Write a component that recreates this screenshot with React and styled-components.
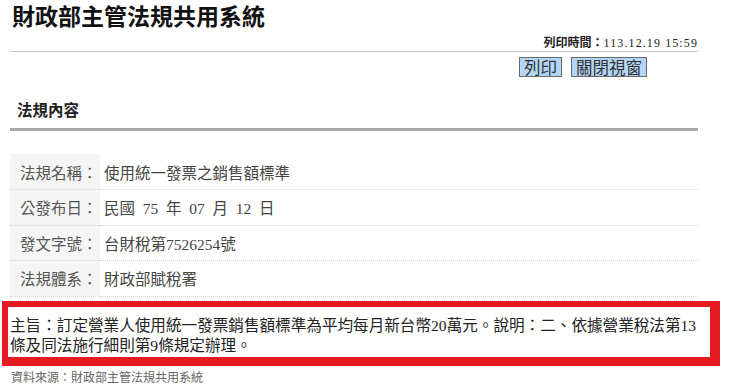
import styled, { createGlobalStyle } from 'styled-components'

const GlobalStyle = createGlobalStyle`
  html, body {
    margin: 0;
    padding: 0;
    background: #fff;
  }
  body {
    font-family: "Liberation Serif", "Noto Sans CJK TC", serif;
    color: #333;
  }
`

const fields = [
  { label: '法規名稱：', value: '使用統一發票之銷售額標準' },
  { label: '公發布日：', value: '民國\u00a0\u00a075\u00a0\u00a0年\u00a0\u00a007\u00a0\u00a0月\u00a0\u00a012\u00a0\u00a0日' },
  { label: '發文字號：', value: '台財稅第7526254號' },
  { label: '法規體系：', value: '財政部賦稅署' }
]

export default function App () {
  return (
    <>
      <GlobalStyle />
      <Page>
        <Title>財政部主管法規共用系統</Title>
        <PrintTime><strong>列印時間：</strong>113.12.19 15:59</PrintTime>
        <Toolbar>
          <Button>列印</Button>
          <Button>關閉視窗</Button>
        </Toolbar>
        <SectionTitle>法規內容</SectionTitle>
        <Table>
          <tbody>
            {fields.map((f, i) => (
              <Row key={`${i}-row`}>
                <Label>{f.label}</Label>
                <Value>{f.value}</Value>
              </Row>
            ))}
          </tbody>
        </Table>
        <Highlight>
          主旨：訂定營業人使用統一發票銷售額標準為平均每月新台幣20萬元。說明：二、依據營業稅法第13條及同法施行細則第9條規定辦理。
        </Highlight>
        <Source>資料來源：財政部主管法規共用系統</Source>
      </Page>
    </>
  )
}

const Page = styled.div`
  width: 688px;
  padding: 0 0 0 10px;
`

const Title = styled.h1`
  margin: 0;
  padding: 0 0 0 2px;
  font-family: "Noto Sans CJK TC", sans-serif;
  font-size: 23px;
  line-height: 30px;
  font-weight: 700;
  color: #111;
`

const PrintTime = styled.div`
  text-align: right;
  font-family: "Liberation Serif", "Noto Sans CJK TC", serif;
  font-size: 12px;
  font-weight: 400;
  letter-spacing: 1.1px;
  line-height: 14px;
  padding: 5px 0 1px;
  color: #222;
  border-bottom: 1px solid #c8c8c8;

  strong {
    font-family: "Noto Sans CJK TC", sans-serif;
    font-weight: 700;
    letter-spacing: 0;
  }
`

const Toolbar = styled.div`
  display: flex;
  justify-content: flex-end;
  gap: 9px;
  padding: 5px 51px 0 0;
`

const Button = styled.button`
  margin: 0;
  padding: 0 4px;
  height: 20px;
  font-family: "Noto Sans CJK TC", sans-serif;
  font-size: 16.5px;
  line-height: 18px;
  color: #333;
  background: #b4d6f6;
  border: 1px solid #6a6a6a;
  border-radius: 0;
  cursor: pointer;
`

const SectionTitle = styled.h2`
  margin: 21px 0 0;
  padding: 0 0 8px 7px;
  font-family: "Noto Sans CJK TC", sans-serif;
  font-size: 15.5px;
  line-height: 22px;
  font-weight: 700;
  color: #222;
  border-bottom: 3px solid #aaa;
`

const Table = styled.table`
  width: 100%;
  margin-top: 23px;
  border-collapse: collapse;
`

const Row = styled.tr`
  height: 35.5px;
  border-bottom: 1px dotted #d4d4d4;
`

const Label = styled.td`
  width: 80px;
  padding: 0 0 0 10px;
  background: #f5f5f5;
  font-family: "Liberation Serif", "Noto Sans CJK TC", serif;
  font-size: 15.5px;
  color: #555;
  white-space: nowrap;
`

const Value = styled.td`
  padding: 0 0 0 4px;
  font-family: "Liberation Serif", "Noto Sans CJK TC", serif;
  font-size: 15.5px;
  color: #444;
`

const Highlight = styled.div`
  margin: 4px -22px 0 -8px;
  padding: 9px 12px 1px 2px;
  border-style: solid;
  border-color: #e31b23;
  border-width: 6px 10px 9px 6px;
  font-family: "Liberation Serif", "Noto Sans CJK TC", serif;
  font-size: 15.6px;
  line-height: 20px;
  color: #222;
`

const Source = styled.div`
  padding: 3px 0 0 1px;
  font-family: "Noto Sans CJK TC", sans-serif;
  font-size: 12px;
  line-height: 15px;
  color: #666;
`
